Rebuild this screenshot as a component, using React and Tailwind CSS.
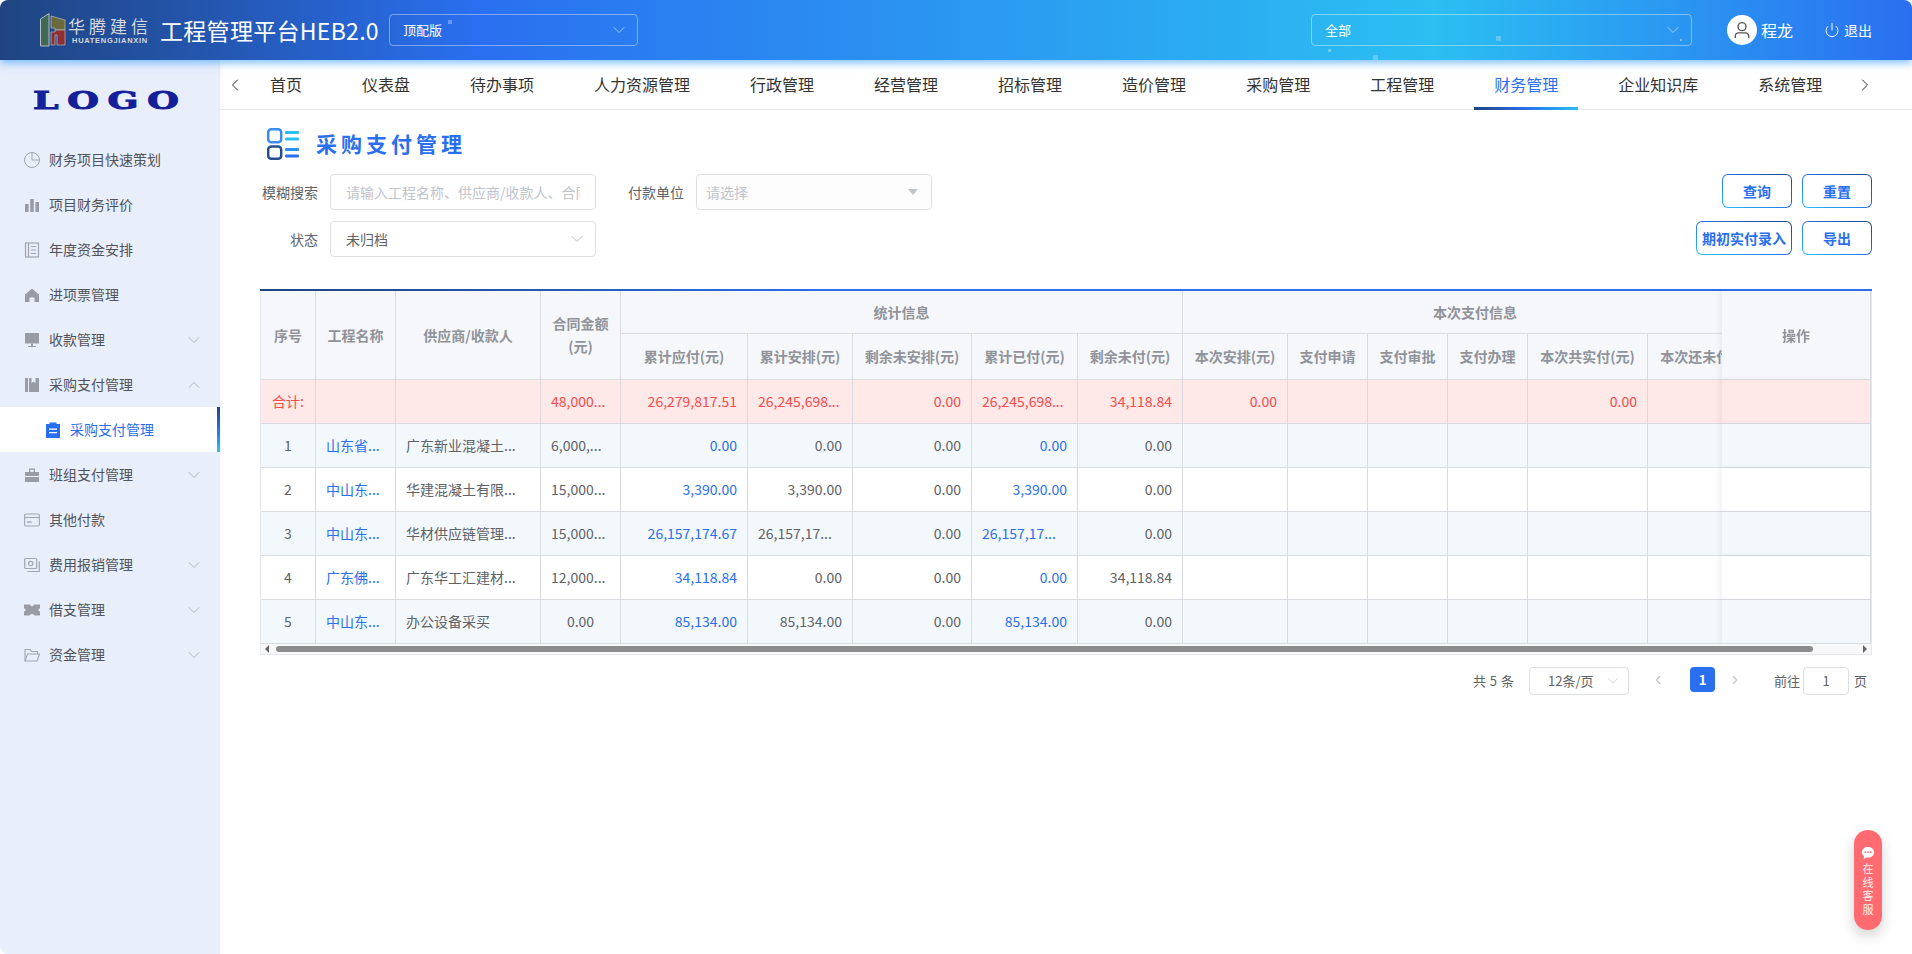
import React from "react";
import { ChevronDown, ChevronUp, ChevronLeft, ChevronRight, Power } from "lucide-react";

const tabs = ["首页", "仪表盘", "待办事项", "人力资源管理", "行政管理", "经营管理", "招标管理", "造价管理", "采购管理", "工程管理", "财务管理", "企业知识库", "系统管理"];

// sidebar icons, all 16x16
const Pie = () => (
  <svg viewBox="0 0 16 16" className="w-4 h-4" fill="none" stroke="#a3a6ae" strokeWidth="1">
    <circle cx="8" cy="8" r="7.500" />
    <path d="M8 .5V8h7.500" />
  </svg>
);
const Bars = () => (
  <svg viewBox="0 0 16 16" className="w-4 h-4" fill="#9a9ca5">
    <rect x="1" y="7" width="3.600" height="8" />
    <rect x="6.200" y="2" width="3.600" height="13" />
    <rect x="11.400" y="5" width="3.600" height="10" />
  </svg>
);
const Book = () => (
  <svg viewBox="0 0 16 16" className="w-4 h-4" fill="none" stroke="#a3a6ae" strokeWidth="1.200">
    <rect x="1.500" y="1" width="13" height="14" />
    <path d="M4.500 1v14M7 4.500h5M7 8h5M7 11.500h5" />
  </svg>
);
const Home = () => (
  <svg viewBox="0 0 16 16" className="w-4 h-4" fill="#9a9ca5">
    <path d="M8 1.500 15 7.500V15h-4.500v-4.500h-5V15H1V7.500z" />
  </svg>
);
const Monitor = () => (
  <svg viewBox="0 0 16 16" className="w-4 h-4" fill="#9a9ca5">
    <rect x="1" y="1" width="14" height="10.500" />
    <rect x="7" y="11.500" width="2" height="2.500" />
    <rect x="4" y="14" width="8" height="1" />
  </svg>
);
const Bookmark = () => (
  <svg viewBox="0 0 16 16" className="w-4 h-4" fill="#9a9ca5">
    <path d="M1 1h3v14H1zM5 1h2.500v5L9.500 4.500 11.500 6V1H15v14H5z" />
  </svg>
);
const Clip = () => (
  <svg viewBox="0 0 14 16" className="w-[14px] h-4" fill="#2a6ff0">
    <path d="M0 2h3.500V.5h7V2H14v14H0z" />
    <path d="M3 6.500h8v1.300H3zM3 10h8v1.300H3z" fill="#fff" />
  </svg>
);
const Case = () => (
  <svg viewBox="0 0 16 16" className="w-4 h-4" fill="#9a9ca5">
    <path d="M5 1.500h6V5h-1.300V2.800H6.300V5H5z" />
    <path d="M1 5h14v4H1zM1 10h14v5H1z" />
  </svg>
);
const Card = () => (
  <svg viewBox="0 0 16 16" className="w-4 h-4" fill="none" stroke="#a3a6ae" strokeWidth="1.100">
    <rect x=".6" y="2" width="14.800" height="12" rx="1.500" />
    <path d="M.6 5.500h14.800" />
    <path d="M3 10h4.500" strokeWidth="1.500" />
  </svg>
);
const Money = () => (
  <svg viewBox="0 0 16 16" className="w-4 h-4" fill="none" stroke="#a3a6ae" strokeWidth="1.200">
    <rect x=".7" y="1.500" width="12" height="10" rx="1" />
    <circle cx="6.700" cy="6.500" r="2.200" />
    <path d="M15.300 4.500V14.500H3.500" />
  </svg>
);
const Ticket = () => (
  <svg viewBox="0 0 16 16" className="w-4 h-4" fill="#9a9ca5">
    <path d="M0 2.500h5.500L8 4.500l2.500-2H16v3.700L14 8l2 1.800v3.700h-5.500L8 11.500l-2.500 2H0V9.800L2 8 0 6.200z" />
  </svg>
);
const Folder = () => (
  <svg viewBox="0 0 16 16" className="w-4 h-4" fill="none" stroke="#a3a6ae" strokeWidth="1.100">
    <path d="M1 14V2.500h5l1.500 2h6V7" />
    <path d="M1 14 3.500 7H15.500L13 14z" />
  </svg>
);

const menu = [
  { label: "财务项目快速策划", icon: Pie },
  { label: "项目财务评价", icon: Bars },
  { label: "年度资金安排", icon: Book },
  { label: "进项票管理", icon: Home },
  { label: "收款管理", icon: Monitor, arrow: "down" },
  { label: "采购支付管理", icon: Bookmark, arrow: "up" },
  { label: "采购支付管理", icon: Clip, sub: true },
  { label: "班组支付管理", icon: Case, arrow: "down" },
  { label: "其他付款", icon: Card },
  { label: "费用报销管理", icon: Money, arrow: "down" },
  { label: "借支管理", icon: Ticket, arrow: "down" },
  { label: "资金管理", icon: Folder, arrow: "down" },
];

const rows = [
  { no: 1, name: "山东省...", sup: "广东新业混凝土...", amt: "6,000,...", pay: "0.00", plan: "0.00", left: "0.00", paid: "0.00", un: "0.00" },
  { no: 2, name: "中山东...", sup: "华建混凝土有限...", amt: "15,000...", pay: "3,390.00", plan: "3,390.00", left: "0.00", paid: "3,390.00", un: "0.00" },
  { no: 3, name: "中山东...", sup: "华材供应链管理...", amt: "15,000...", pay: "26,157,174.67", plan: "26,157,17...", left: "0.00", paid: "26,157,17...", un: "0.00" },
  { no: 4, name: "广东佛...", sup: "广东华工汇建材...", amt: "12,000...", pay: "34,118.84", plan: "0.00", left: "0.00", paid: "0.00", un: "34,118.84" },
  { no: 5, name: "中山东...", sup: "办公设备采买", amt: "0.00", pay: "85,134.00", plan: "85,134.00", left: "0.00", paid: "85,134.00", un: "0.00" },
];

const th = "border-r border-b border-[#d9dbe0] bg-[#f5f7fb] px-[10px] text-center text-[14px] font-bold text-[#909399] whitespace-nowrap overflow-hidden";
const td = "h-11 border-r border-b border-[#d9dbe0] px-[10px] text-[14px] whitespace-nowrap overflow-hidden";
const opTh = "sticky right-0 z-10 shadow-[-3px_0_6px_rgba(0,0,0,0.05)]";

// long values are cut with dots, those start at the left of the cell
const numAlign = (v) => (v.endsWith("...") ? "text-left" : "text-right");

function GradButton({ children, w }) {
  return (
    <button className={`${w} h-[34px] rounded-md p-px bg-gradient-to-tr from-[#2bbff2] via-[#2a6ff0] to-[#1f4480]`}>
      <span className="flex h-full w-full items-center justify-center rounded-[5px] bg-white text-[14px] font-bold whitespace-nowrap text-[#2a6ff0]">{children}</span>
    </button>
  );
}

function SelectBox({ text, w }) {
  return (
    <div className={`${w} flex h-[32px] items-center justify-between rounded border border-white/40 pl-[13px] pr-[8px] text-[13px] text-white`}>
      <span>{text}</span>
      <ChevronDown size={20} strokeWidth={1} className="text-white/70" />
    </div>
  );
}

export default function App() {
  return (
    <div className="flex h-screen flex-col overflow-hidden rounded-[8px] bg-white font-['Noto_Sans_CJK_SC','Noto_Sans',sans-serif] text-[#606266]">
      {/* header */}
      <header className="relative z-20 flex h-[60px] shrink-0 items-center bg-gradient-to-r from-[#1f4480] via-[#2a6ff0] via-[25%] to-[#2a6ff0] pl-[40px] pr-[40px] shadow-[0_3px_8px_rgba(80,170,250,0.75)]">
        <div className="absolute inset-0 bg-[linear-gradient(90deg,rgba(42,111,240,0)_25%,#2bbff2_75%,rgba(42,111,240,0)_100%)]" />
        <i className="absolute left-[448px] top-[20px] h-1 w-1 bg-white/30" />
        <i className="absolute left-[1328px] top-[49px] h-[3px] w-[3px] bg-white/30" />
        <i className="absolute left-[1373px] top-[55px] h-[5px] w-[5px] bg-white/25" />
        <i className="absolute left-[1496px] top-[36px] h-[5px] w-[5px] bg-white/25" />
        <i className="absolute left-[1680px] top-[39px] h-[2px] w-[2px] bg-white/40" />

        <div className="relative flex w-full items-center">
          <svg viewBox="0 0 26 34" className="h-[34px] w-[26px] shrink-0">
            <path d="M.5 6 9 .5V33H.5z" fill="#3f6a55" stroke="#b8bcc4" />
            <path d="M11 3l14 4v10H15v-2h-4z" fill="#6a6a3c" stroke="#b8bcc4" strokeWidth=".7" />
            <path d="M11 19h4v-2h10v15H17V22h-2v10h-4z" fill="#8f2f34" stroke="#b8bcc4" strokeWidth=".7" />
          </svg>
          <div className="ml-[4px] flex w-[80px] shrink-0 flex-col items-center">
            <span className="text-[17px] leading-[21px] tracking-[4px] whitespace-nowrap text-[#d5d8dd]">华腾建信</span>
            <span className="font-['Liberation_Sans'] text-[7.500px] font-bold leading-[9px] tracking-[0.7px] text-[#d5d8dd]">HUATENGJIANXIN</span>
          </div>
          <div className="ml-[10px] w-[229px] shrink-0 text-[23px] leading-none tracking-[0.3px] whitespace-nowrap text-white">工程管理平台HEB2.0</div>
          <SelectBox text="顶配版" w="w-[249px]" />
          <div className="flex-1" />
          <SelectBox text="全部" w="w-[381px]" />
          <div className="ml-[35px] flex h-[30px] w-[30px] items-center justify-center rounded-full bg-white">
            <svg viewBox="0 0 16 16" className="h-[18px] w-[18px]" fill="none" stroke="#555" strokeWidth="1.200">
              <circle cx="8" cy="5" r="3.500" />
              <path d="M2 15v-1.500A3 3 0 0 1 5 10.500h6a3 3 0 0 1 3 3V15" />
            </svg>
          </div>
          <span className="ml-[4px] text-[16px] text-white">程龙</span>
          <Power size={16} strokeWidth={1.400} className="ml-[31px] text-white" />
          <span className="ml-[4px] text-[14px] text-white">退出</span>
        </div>
      </header>

      <div className="flex min-h-0 flex-1">
        {/* sidebar */}
        <aside className="w-[220px] shrink-0 bg-[#e8eefa] shadow-[2px_0_4px_rgba(0,0,0,0.03)]">
          <div className="flex h-[77px] items-center justify-center pt-[3px]">
            <span className="font-['DejaVu_Serif'] text-[25px] font-bold leading-none tracking-[6px] text-[#14209a] [-webkit-text-stroke:1px_#14209a] [transform:scaleX(1.45)]">LOGO</span>
          </div>
          <nav>
            {menu.map((m, i) => {
              const Icon = m.icon;
              return (
                <div key={i} className={m.sub ? "relative flex h-[45px] items-center bg-white pl-[46px] text-[#2a6ff0]" : "relative flex h-[45px] items-center pl-[24px] text-[#50535a]"}>
                  <Icon />
                  <span className={m.sub ? "ml-[10px] text-[14px]" : "ml-[9px] text-[14px]"}>{m.label}</span>
                  {m.arrow === "down" && <ChevronDown size={20} strokeWidth={1} className="absolute left-[184px] text-[#a8abb2]" />}
                  {m.arrow === "up" && <ChevronUp size={20} strokeWidth={1} className="absolute left-[184px] text-[#a8abb2]" />}
                  {m.sub && <i className="absolute inset-y-0 right-0 w-[3px] bg-gradient-to-b from-[#1f4480] via-[#2a6ff0] to-[#2bbff2]" />}
                </div>
              );
            })}
          </nav>
        </aside>

        <main className="min-w-0 flex-1">
          {/* tabs */}
          <div className="flex h-[50px] items-stretch border-b border-[#e6e6e6] pl-[5px] pr-[37px]">
            <ChevronLeft size={20} strokeWidth={1.200} className="mt-[15px] shrink-0 text-[#333]" />
            <div className="ml-[-5px] flex flex-1">
              {tabs.map((t) => (
                <div key={t} className={t === "财务管理" ? "relative mx-[10px] flex items-center px-5 pb-[2px] text-[16px] whitespace-nowrap text-[#2a6ff0]" : "mx-[10px] flex items-center px-5 pb-[2px] text-[16px] whitespace-nowrap text-[#333]"}>
                  {t}
                  {t === "财务管理" && <i className="absolute inset-x-0 bottom-[-1px] h-[3px] bg-gradient-to-r from-[#1f4480] via-[#2a6ff0] to-[#2bbff2]" />}
                </div>
              ))}
            </div>
            <ChevronRight size={20} strokeWidth={1.200} className="mt-[15px] shrink-0 text-[#333]" />
          </div>

          <div className="pl-[40px] pr-[40px]">
            {/* title */}
            <div className="flex h-[64px] items-center pl-[7px] pt-[4px]">
              <svg viewBox="0 0 32 32" className="h-8 w-8" fill="none">
                <rect x="1.200" y="1.200" width="13" height="13" rx="3" stroke="#3b8bf0" strokeWidth="2.500" />
                <rect x="1.200" y="18.500" width="13" height="12.300" rx="3" stroke="#25508f" strokeWidth="2.500" />
                <rect x="18" y="3" width="14" height="3" rx="1" fill="#2bbff2" />
                <rect x="18" y="9.500" width="14" height="3" rx="1" fill="#2bbff2" />
                <rect x="18" y="20" width="14" height="3" rx="1" fill="#2a8ff0" />
                <rect x="18" y="26.500" width="14" height="3" rx="1" fill="#2a6ff0" />
              </svg>
              <h1 className="ml-[17px] text-[21px] font-bold tracking-[4px] text-[#2a6ff0]">采购支付管理</h1>
            </div>

            {/* filters */}
            <div className="flex justify-between">
              <div className="flex flex-col gap-[11px]">
                <div className="flex items-center">
                  <label className="w-[58px] text-right text-[14px] text-[#606266] whitespace-nowrap">模糊搜索</label>
                  <div className="ml-[12px] flex h-[36px] w-[266px] items-center overflow-hidden rounded border border-[#dcdfe6] px-[15px] text-[14px] whitespace-nowrap text-[#c0c4cc]">
                    <span className="w-full overflow-hidden">请输入工程名称、供应商/收款人、合同编号</span>
                  </div>
                  <label className="ml-[32px] text-[14px] text-[#606266]">付款单位</label>
                  <div className="ml-[12px] flex h-[36px] w-[236px] items-center justify-between rounded border border-[#dcdfe6] bg-[#fdfdfd] pl-[9px] pr-[13px] text-[14px] text-[#c0c4cc]">
                    <span>请选择</span>
                    <i className="h-0 w-0 border-x-[5px] border-t-[6px] border-x-transparent border-t-[#c0c4cc]" />
                  </div>
                </div>
                <div className="flex items-center">
                  <label className="w-[58px] text-right text-[14px] text-[#606266]">状态</label>
                  <div className="ml-[12px] flex h-[36px] w-[266px] items-center justify-between rounded border border-[#dcdfe6] pl-[15px] pr-[8px] text-[14px] text-[#606266]">
                    <span>未归档</span>
                    <ChevronDown size={20} strokeWidth={0.9} className="text-[#a8abb2]" />
                  </div>
                </div>
              </div>
              <div className="flex flex-col items-end gap-[13px]">
                <div className="flex gap-[10px]">
                  <GradButton w="w-[70px]">查询</GradButton>
                  <GradButton w="w-[70px]">重置</GradButton>
                </div>
                <div className="flex gap-[10px]">
                  <GradButton w="w-[96px]">期初实付录入</GradButton>
                  <GradButton w="w-[70px]">导出</GradButton>
                </div>
              </div>
            </div>

            {/* table */}
            <div className="mt-[32px] h-[2px] bg-gradient-to-r from-[#1f4480] via-[#2a6ff0] via-[35%] to-[#2a6ff0]" />
            <div className="overflow-hidden border-l border-r border-[#e4e7ed]">
              <table className="w-[1656px] table-fixed border-separate border-spacing-0">
                <colgroup>
                  {[55, 80, 145, 80, 127, 105, 119, 106, 105, 105, 80, 80, 80, 120, 120, 149].map((w, i) => (
                    <col key={i} style={{ width: w }} />
                  ))}
                </colgroup>
                <thead>
                  <tr className="h-[43px]">
                    <th rowSpan={2} className={th}>序号</th>
                    <th rowSpan={2} className={th}>工程名称</th>
                    <th rowSpan={2} className={th}>供应商/收款人</th>
                    <th rowSpan={2} className={`${th} leading-[23px] whitespace-normal`}>合同金额<br />(元)</th>
                    <th colSpan={5} className={th}>统计信息</th>
                    <th colSpan={6} className={th}>本次支付信息</th>
                    <th rowSpan={2} className={`${th} ${opTh}`}>操作</th>
                  </tr>
                  <tr className="h-[46px]">
                    {["累计应付(元)", "累计安排(元)", "剩余未安排(元)", "累计已付(元)", "剩余未付(元)", "本次安排(元)", "支付申请", "支付审批", "支付办理", "本次共实付(元)", "本次还未付(元)"].map((h) => (
                      <th key={h} className={th}>{h}</th>
                    ))}
                  </tr>
                </thead>
                <tbody>
                  <tr className="bg-[#fee8e8] text-[#fa4b4b]">
                    <td className={`${td} text-center`}>合计:</td>
                    <td className={td} />
                    <td className={td} />
                    <td className={td}>48,000...</td>
                    <td className={`${td} text-right`}>26,279,817.51</td>
                    <td className={td}>26,245,698...</td>
                    <td className={`${td} text-right`}>0.00</td>
                    <td className={td}>26,245,698...</td>
                    <td className={`${td} text-right`}>34,118.84</td>
                    <td className={`${td} text-right`}>0.00</td>
                    <td className={td} />
                    <td className={td} />
                    <td className={td} />
                    <td className={`${td} text-right`}>0.00</td>
                    <td className={td} />
                    <td className={`${td} sticky right-0 z-10 bg-[#fee8e8] shadow-[-3px_0_6px_rgba(0,0,0,0.05)]`} />
                  </tr>
                  {rows.map((r) => {
                    const bg = r.no % 2 ? "bg-[#f3f8fd]" : "bg-white";
                    return (
                      <tr key={r.no} className={bg}>
                        <td className={`${td} text-center`}>{r.no}</td>
                        <td className={`${td} text-[#2a6ff0]`}>{r.name}</td>
                        <td className={td}>{r.sup}</td>
                        <td className={`${td} ${r.amt.endsWith("...") ? "text-left" : "text-center"}`}>{r.amt}</td>
                        <td className={`${td} text-right text-[#2a6ff0]`}>{r.pay}</td>
                        <td className={`${td} ${numAlign(r.plan)}`}>{r.plan}</td>
                        <td className={`${td} text-right`}>{r.left}</td>
                        <td className={`${td} ${numAlign(r.paid)} text-[#2a6ff0]`}>{r.paid}</td>
                        <td className={`${td} text-right`}>{r.un}</td>
                        <td className={td} />
                        <td className={td} />
                        <td className={td} />
                        <td className={td} />
                        <td className={td} />
                        <td className={td} />
                        <td className={`${td} sticky right-0 z-10 ${bg} shadow-[-3px_0_6px_rgba(0,0,0,0.05)]`} />
                      </tr>
                    );
                  })}
                </tbody>
              </table>
            </div>

            {/* scrollbar */}
            <div className="flex h-[11px] items-center border-x border-b border-[#e4e7ed] bg-[#f8f8f8]">
              <i className="ml-[4px] h-0 w-0 border-y-[4px] border-r-[4px] border-y-transparent border-r-[#666]" />
              <div className="ml-[7px] h-[6px] w-[1537px] rounded-full bg-[#8c8c8c]" />
              <div className="flex-1" />
              <i className="mr-[4px] h-0 w-0 border-y-[4px] border-l-[4px] border-y-transparent border-l-[#666]" />
            </div>

            {/* pagination */}
            <div className="mt-[12px] flex items-start justify-end pr-[5px] text-[13px] text-[#606266]">
              <span className="mt-[4px] [word-spacing:1px]">共 5 条</span>
              <div className="ml-[15px] flex h-[28px] w-[100px] items-center justify-between rounded border border-[#dcdfe6] pl-[18px] pr-[6px]">
                <span>12条/页</span>
                <ChevronDown size={18} strokeWidth={1} className="text-[#c0c4cc]" />
              </div>
              <ChevronLeft size={14} strokeWidth={2} className="ml-[22px] mt-[6px] text-[#c0c4cc]" />
              <div className="ml-[25px] flex h-[25px] w-[25px] items-center justify-center rounded bg-[#2a6ff0] font-bold text-white">1</div>
              <ChevronRight size={14} strokeWidth={2} className="ml-[13px] mt-[6px] text-[#c0c4cc]" />
              <span className="ml-[32px] mt-[4px]">前往</span>
              <div className="ml-[3px] flex h-[28px] w-[46px] items-center justify-center rounded border border-[#dcdfe6]">1</div>
              <span className="ml-[5px] mt-[4px]">页</span>
            </div>
          </div>
        </main>
      </div>

      {/* online service */}
      <div className="absolute left-[1854px] top-[830px] z-30 flex h-[100px] w-[28px] flex-col items-center rounded-full bg-[#ff6b70] pt-[16px] shadow-[0_6px_14px_rgba(0,0,0,0.18)]">
        <svg viewBox="0 0 16 16" className="h-[14px] w-[14px]" fill="#fff">
          <path d="M8 1C3.800 1 1 3.500 1 7c0 2 1 3.600 2.500 4.700L3 15l3.500-2c.5.1 1 .1 1.500.1 4.200 0 7-2.600 7-6.100S12.200 1 8 1z" />
          <circle cx="5" cy="7" r="1" fill="#ff6b70" />
          <circle cx="8" cy="7" r="1" fill="#ff6b70" />
          <circle cx="11" cy="7" r="1" fill="#ff6b70" />
        </svg>
        <span className="mt-[2px] w-[12px] text-center text-[11px] leading-[13.500px] text-white/90">在线客服</span>
      </div>
    </div>
  );
}
